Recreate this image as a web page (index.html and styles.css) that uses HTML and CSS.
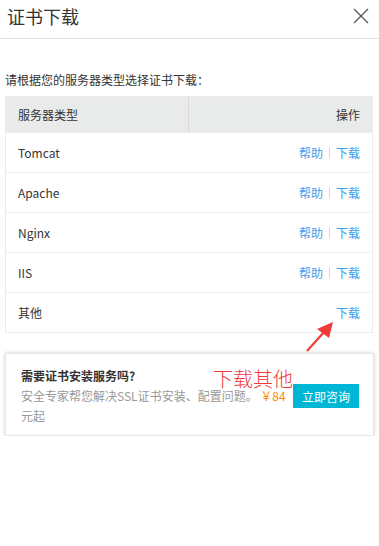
FILE: index.html
```html
<!DOCTYPE html>
<html lang="zh-CN">

<head>
  <meta charset="UTF-8">
  <meta name="viewport" content="width=device-width, initial-scale=1.0">
  <title>证书下载</title>
  <link rel="stylesheet" href="styles.css">
</head>

<body>
  <div class="dialog">
    <div class="dialog-header">
      <h2 class="dialog-title">证书下载</h2>
      <svg class="close-icon" width="16" height="16" viewBox="0 0 16 16">
        <path d="M1 1 L15 15 M15 1 L1 15" stroke="#555" stroke-width="1.3" fill="none" />
      </svg>
    </div>
    <div class="dialog-body">
      <p class="intro">请根据您的服务器类型选择证书下载：</p>
      <table class="server-table">
        <thead>
          <tr>
            <th class="col-type">服务器类型</th>
            <th class="col-action">操作</th>
          </tr>
        </thead>
        <tbody>
          <tr>
            <td>Tomcat</td>
            <td class="col-action"><a href="#">帮助</a><span class="sep"></span><a href="#">下载</a></td>
          </tr>
          <tr>
            <td>Apache</td>
            <td class="col-action"><a href="#">帮助</a><span class="sep"></span><a href="#">下载</a></td>
          </tr>
          <tr>
            <td>Nginx</td>
            <td class="col-action"><a href="#">帮助</a><span class="sep"></span><a href="#">下载</a></td>
          </tr>
          <tr>
            <td>IIS</td>
            <td class="col-action"><a href="#">帮助</a><span class="sep"></span><a href="#">下载</a></td>
          </tr>
          <tr>
            <td>其他</td>
            <td class="col-action"><a href="#">下载</a></td>
          </tr>
        </tbody>
      </table>

      <div class="promo">
        <div class="promo-text">
          <h3>需要证书安装服务吗?</h3>
          <p>安全专家帮您解决SSL证书安装、配置问题。 <span class="price">￥84</span> 元起</p>
        </div>
        <button class="promo-btn">立即咨询</button>
      </div>
    </div>

    <!-- annotation drawn over the screenshot -->
    <svg class="note-arrow" width="40" height="40" viewBox="0 0 40 40">
      <line x1="6" y1="32" x2="24" y2="12" stroke="#f23a3a" stroke-width="2.2" />
      <polygon points="32,3 28,19 16,10" fill="#f23a3a" />
    </svg>
    <span class="note-text">下载其他</span>
  </div>
</body>

</html>
```

FILE: styles.css
```css
body {
  margin: 0;
  padding: 0;
  background-color: #fff;
  font-family: "Noto Sans CJK SC", sans-serif;
  color: #333;
}

.dialog {
  position: relative;
  width: 379px;
}

.dialog-header {
  display: flex;
  align-items: center;
  justify-content: space-between;
  height: 38px;
  padding: 0 6px 0 7px;
  border-bottom: 1px solid #e3e3e3;
  box-sizing: content-box;
}

.dialog-title {
  margin: 0 0 6px 0;
  font-size: 18px;
  font-weight: normal;
  color: #333;
  line-height: 1;
}

.close-icon {
  margin: 0 4px 6px 0;
}

.dialog-body {
  padding: 0 5px;
}

.intro {
  margin: 31px 0 6px 0;
  font-size: 12px;
  line-height: 20px;
  color: #333;
}

.server-table {
  width: calc(100% - 1px);
  border-collapse: collapse;
  border: 1px solid #ececec;
  font-size: 12px;
}

.server-table th {
  height: 35px;
  padding: 0 12px;
  background-color: #e9ebea;
  font-weight: normal;
  text-align: left;
  color: #333;
}

.server-table th.col-type {
  width: 158px;
  border-right: 1px solid #d9d9d9;
}

.server-table td {
  height: 39px;
  padding: 0 12px;
  border-top: 1px solid #efefef;
  color: #333;
}

.server-table .col-action {
  text-align: right;
}

.server-table a {
  color: #3b9cea;
  text-decoration: none;
}

.sep {
  display: inline-block;
  width: 1px;
  height: 12px;
  margin: 0 6px;
  background-color: #d9d9d9;
  vertical-align: -1px;
}

.promo {
  display: flex;
  align-items: center;
  margin-top: 20px;
  padding: 12px 14px 9px 15px;
  border: 1px solid #e6e6e6;
  box-shadow: 0 0 4px rgba(0, 0, 0, 0.18);
}

.promo-text {
  flex: 1;
  font-size: 12px;
  line-height: 20px;
  padding-right: 4px;
}

.promo-text h3 {
  margin: 0;
  font-size: 12px;
  font-weight: bold;
  color: #333;
}

.promo-text p {
  margin: 0;
  color: #999;
}

.price {
  color: #ff8a00;
}

.promo-btn {
  flex: none;
  width: 66px;
  height: 24px;
  padding: 0;
  border: none;
  background-color: #00b6d5;
  color: #fff;
  font-family: inherit;
  font-size: 12px;
  cursor: pointer;
}

.note-arrow {
  position: absolute;
  left: 301px;
  top: 319px;
}

.note-text {
  position: absolute;
  left: 213px;
  top: 369px;
  font-size: 20px;
  line-height: 1;
  color: #f23a3a;
  font-weight: 300;
}
```
